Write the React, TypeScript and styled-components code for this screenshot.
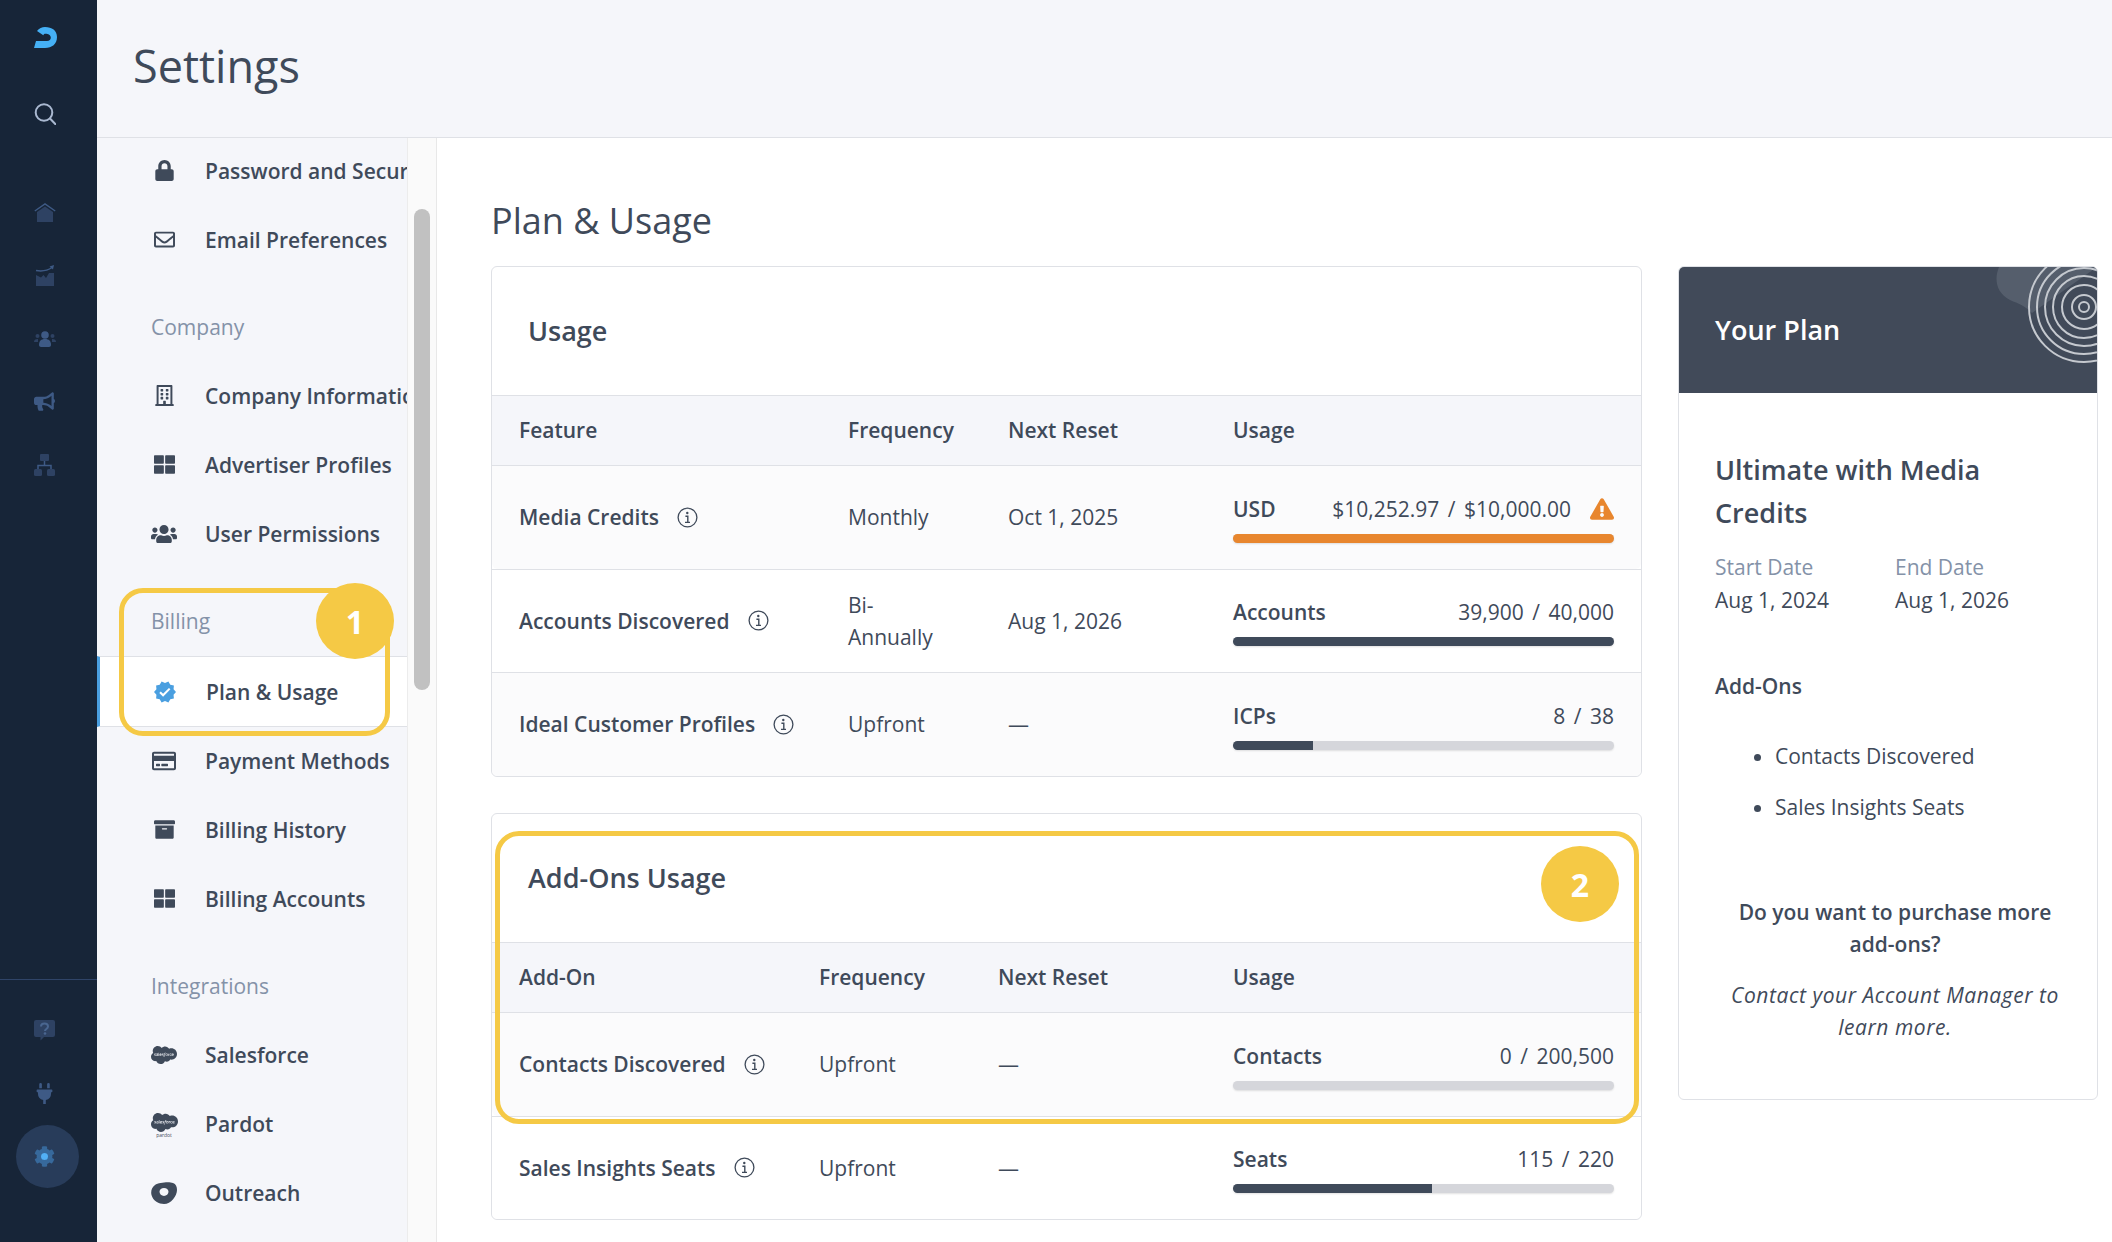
import React from 'react';
import styled, { createGlobalStyle } from 'styled-components';
import {
  FaArchive,
  FaBullhorn,
  FaCog,
  FaExclamationTriangle,
  FaLock,
  FaPlug,
  FaRegBuilding,
  FaRegCreditCard,
  FaRegEnvelope,
  FaSalesforce,
  FaThLarge,
  FaUsers,
} from 'react-icons/fa';
import { MdVerified } from 'react-icons/md';

const GlobalStyle = createGlobalStyle`
  html, body {
    margin: 0;
    height: 100%;
    background: #fff;
    font-family: 'Open Sans', sans-serif;
    color: #3f4a5a;
  }

  * {
    box-sizing: border-box;
  }
`;

const Page = styled.div`
  display: flex;
  width: 2112px;
  height: 1242px;
  overflow: hidden;
`;

/* left rail */
const Rail = styled.nav`
  display: flex;
  flex-direction: column;
  flex: 0 0 97px;
  height: 100%;
  background: #172538;
`;

const RailLogo = styled.div`
  display: flex;
  height: 21px;
  margin: 27px 0 0 34px;
`;

const RailSearch = styled.div`
  display: flex;
  height: 22px;
  margin: 55px 0 0 34px;
`;

const RailGroup = styled.div`
  display: flex;
  flex-direction: column;
  margin-top: 56px;
`;

const RailItem = styled.div<{ $color?: string }>`
  display: flex;
  align-items: center;
  justify-content: center;
  width: 89px;
  height: 63px;
  font-size: 21px;
  color: ${({ $color }) => $color || '#34496d'};
`;

const RailFooter = styled.div`
  display: flex;
  flex-direction: column;
  margin-top: auto;
  padding: 19px 0 54px;
  border-top: 1px solid #2f4468;
`;

const GearCircle = styled.div`
  display: flex;
  align-items: center;
  justify-content: center;
  width: 63px;
  height: 63px;
  margin: 0 0 0 16px;
  padding-right: 6px;
  border-radius: 50%;
  background: #283c5a;
`;

const GearIcon = styled.span`
  position: relative;
  display: flex;
  font-size: 21px;
  color: #37699c;

  &::after {
    content: '';
    position: absolute;
    top: 7px;
    left: 7px;
    width: 7px;
    height: 7px;
    border-radius: 50%;
    background: #52b0f5;
  }
`;

/* right of the rail */
const Column = styled.div`
  display: flex;
  flex-direction: column;
  flex: 1;
  min-width: 0;
`;

const Header = styled.header`
  display: flex;
  align-items: center;
  flex: 0 0 138px;
  padding: 0 0 6px 36px;
  background: #f5f6fa;
  border-bottom: 1px solid #dfe1e6;
`;

const HeaderTitle = styled.h1`
  margin: 0;
  font-size: 45px;
  font-weight: 400;
  color: #3f4a5a;
`;

const Body = styled.div`
  display: flex;
  flex: 1;
  min-height: 0;
`;

/* settings menu */
const Menu = styled.aside`
  position: relative;
  flex: 0 0 310px;
  overflow: hidden;
  background: #f5f6fa;

  > :first-child {
    margin-top: -2px;
  }
`;

const MenuLabel = styled.div`
  display: flex;
  align-items: center;
  height: 69px;
  margin-top: 18px;
  padding-left: 54px;
  font-size: 21px;
  color: #8492a8;
`;

const MenuRow = styled.div<{ $active?: boolean }>`
  display: flex;
  align-items: center;
  height: ${({ $active }) => ($active ? '71px' : '69px')};
  margin: ${({ $active }) => ($active ? '1px 0 -1px' : '0')};
  padding-left: ${({ $active }) => ($active ? '38px' : '40px')};
  font-size: 21px;
  font-weight: 600;
  white-space: nowrap;
  color: #3f4a5a;
  background: ${({ $active }) => ($active ? '#fff' : 'transparent')};
  border-left: ${({ $active }) => ($active ? '3px solid #4a9fe0' : '0')};
  border-top: ${({ $active }) => ($active ? '1px solid #dfe1e6' : '0')};
  border-bottom: ${({ $active }) => ($active ? '1px solid #dfe1e6' : '0')};
`;

const MenuIcon = styled.span<{ $color?: string }>`
  display: flex;
  align-items: center;
  justify-content: center;
  flex: 0 0 54px;
  margin-right: 14px;
  font-size: 21px;
  color: ${({ $color }) => $color || '#3f4a5a'};
`;

const PardotMark = styled.span`
  display: flex;
  flex-direction: column;
  align-items: center;
  line-height: 1;

  small {
    font-size: 5px;
    font-weight: 400;
    line-height: 5px;
    margin-top: -3px;
  }
`;

const ScrollTrack = styled.div`
  flex: 0 0 30px;
  padding: 71px 6px 0;
  background: #fafafa;
  border-left: 1px solid #ececec;
  border-right: 1px solid #e8e8e8;
`;

const ScrollThumb = styled.div`
  height: 481px;
  border-radius: 8px;
  background: #c1c1c1;
`;

/* callouts */
const Callout = styled.div<{ $left: number; $top: number; $width: number; $height: number }>`
  position: absolute;
  left: ${({ $left }) => $left}px;
  top: ${({ $top }) => $top}px;
  width: ${({ $width }) => $width}px;
  height: ${({ $height }) => $height}px;
  border: 5px solid #f5c945;
  border-radius: 24px;
  pointer-events: none;
`;

const Badge = styled.div<{ $left: number; $top: number }>`
  position: absolute;
  left: ${({ $left }) => $left}px;
  top: ${({ $top }) => $top}px;
  display: flex;
  align-items: center;
  justify-content: center;
  width: 78px;
  height: 76px;
  border-radius: 50%;
  background: #f5c945;
  color: #fff;
  font-size: 32px;
  font-weight: 700;
`;

/* plan and usage */
const Main = styled.main`
  flex: 1;
  min-width: 0;
  padding: 0 14px 0 54px;
  background: #fff;
`;

const MainTitle = styled.h2`
  display: flex;
  align-items: center;
  height: 128px;
  margin: 0;
  padding-top: 36px;
  font-size: 36px;
  font-weight: 400;
  color: #3f4a5a;
`;

const MainGrid = styled.div`
  display: grid;
  grid-template-columns: 1151px 420px;
  column-gap: 36px;
  align-items: start;
`;

const Stack = styled.div`
  display: flex;
  flex-direction: column;
  row-gap: 36.5px;
`;

const Card = styled.section`
  position: relative;
  border: 1px solid #dfe1e6;
  border-radius: 6px;
  background: #fff;
`;

const CardTitle = styled.h3`
  display: flex;
  align-items: center;
  height: 128px;
  margin: 0;
  padding: 0 0 2px 36px;
  font-size: 27px;
  font-weight: 600;
  color: #3f4a5a;
`;

const Row = styled.div<{ $cols: string; $tint?: string }>`
  display: grid;
  grid-template-columns: ${({ $cols }) => $cols};
  align-items: center;
  padding: 0 27px;
  border-top: 1px solid #dfe1e6;
  background: ${({ $tint }) => $tint || '#fff'};
`;

const HeadRow = styled(Row)`
  height: 70px;
  padding-bottom: 2px;
  font-size: 21px;
  font-weight: 600;
`;

const DataRow = styled(Row)`
  height: 103.5px;
  font-size: 21px;
  line-height: 32px;
  border-bottom-left-radius: 6px;
  border-bottom-right-radius: 6px;
`;

const FeatureName = styled.div`
  display: flex;
  align-items: center;
  column-gap: 18px;
  font-weight: 600;
`;

const UsageCell = styled.div`
  display: flex;
  flex-direction: column;
  padding-top: 3px;
`;

const UsageLine = styled.div`
  display: flex;
  align-items: center;
  justify-content: space-between;
  line-height: 29px;
`;

const UsageLabel = styled.span`
  font-weight: 600;
`;

const UsageValues = styled.span`
  display: flex;
  align-items: center;
`;

const Slash = styled.span`
  margin: 0 8.5px;
`;

const WarnIcon = styled.span`
  display: flex;
  margin-left: 19px;
  font-size: 24px;
  color: #e8862e;
`;

const Bar = styled.div`
  height: 9px;
  margin-top: 10px;
  overflow: hidden;
  border-radius: 5px;
  background: #d5d6db;
  box-shadow: 0 1px 2px rgba(0, 0, 0, 0.12);
`;

const BarFill = styled.div<{ $color?: string }>`
  height: 100%;
  background: ${({ $color }) => $color || '#3f4a5a'};
`;

/* your plan */
const PlanCard = styled.section`
  border: 1px solid #dfe1e6;
  border-radius: 6px;
  overflow: hidden;
  background: #fff;
`;

const PlanHeader = styled.div`
  position: relative;
  display: flex;
  align-items: center;
  height: 126px;
  padding: 0 0 2px 36px;
  background: #414a59;
  color: #fff;
  font-size: 27px;
  font-weight: 600;
`;

const PlanArt = styled.svg`
  position: absolute;
  top: 0;
  right: 0;
`;

const PlanBody = styled.div`
  padding: 55px 22px 56px 36px;
  font-size: 21px;
  line-height: 32px;
`;

const PlanName = styled.h4`
  max-width: 300px;
  margin: 0;
  font-size: 27px;
  font-weight: 600;
  line-height: 43px;
`;

const Dates = styled.div`
  display: grid;
  grid-template-columns: 180px 1fr;
  margin-top: 17px;
  row-gap: 1px;
`;

const DateLabel = styled.div`
  color: #8492a8;
`;

const AddOnsTitle = styled.div`
  margin-top: 54px;
  font-weight: 600;
`;

const AddOnsList = styled.ul`
  margin: 38px 0 0;
  padding-left: 60px;

  li + li {
    margin-top: 19px;
  }
`;

const Cta = styled.p`
  margin: 73px 0 0;
  font-weight: 600;
  text-align: center;
`;

const CtaNote = styled.p`
  margin: 19px 0 0;
  font-style: italic;
  letter-spacing: 0.55px;
  text-align: center;
`;

function InfoIcon() {
  return (
    <svg width="21" height="21" viewBox="0 0 21 21" fill="none" stroke="#3f4a5a">
      <circle cx="10.5" cy="10.5" r="9.4" strokeWidth="1.3" />
      <circle cx="10.3" cy="6" r="1.2" fill="#3f4a5a" stroke="none" />
      <path d="M8.4 9.2h2.4v6M8 15.4h5" strokeWidth="1.4" />
    </svg>
  );
}

function Logo() {
  return (
    <svg width="23" height="21" viewBox="0 0 23 21">
      <path
        fill="#45b0f5"
        d="M3 4C5 1.500 8 0 11 0c7 0 12 3.500 12 10 0 7-5 11-12 11H0l2-7h11c2.500 0 3.800-1.400 3.800-3.400 0-2.400-2.500-3.800-5.500-3.800-.8 0-1.400.4-2 1.400z"
      />
    </svg>
  );
}

function SearchIcon() {
  return (
    <svg width="22" height="22" viewBox="0 0 22 22" fill="none" stroke="#a9b8d0" strokeWidth="2">
      <circle cx="10" cy="9.500" r="8.300" />
      <path d="M16 15.500l5.500 5.800" strokeLinecap="round" />
    </svg>
  );
}

function HomeIcon() {
  return (
    <svg width="22" height="20" viewBox="0 0 22 20">
      <path d="M0.800 8L11 1l10.200 7" fill="none" stroke="#3e5a85" strokeWidth="1.500" />
      <path d="M3 9l8-5.500L19 9v10H3z" fill="#2e4263" />
    </svg>
  );
}

function ChartIcon() {
  return (
    <svg width="20" height="22" viewBox="0 0 20 22">
      <path d="M1 5.500c6 1 11 .5 16-3" fill="none" stroke="#3e5a85" strokeWidth="1.500" />
      <path d="M14.500 1.500L19 0l-1 4.500z" fill="#3e5a85" />
      <path d="M1 21V10l5 2.500 2.500-2.500 2.500 3 3-5h5v13z" fill="#2e4263" />
    </svg>
  );
}

function RailUsersIcon() {
  return (
    <svg width="22" height="16" viewBox="0 0 22 16">
      <circle cx="3.500" cy="5" r="2" fill="#2e4263" />
      <circle cx="18.500" cy="5" r="2" fill="#2e4263" />
      <path d="M0 11c0-2 1-3 4-3v3zM22 11c0-2-1-3-4-3v3z" fill="#2e4263" />
      <circle cx="11" cy="4" r="3.800" fill="#3e5a85" />
      <path d="M5 14c0-4 2-6 6-6s6 2 6 6c0 1-1 2-2 2H7c-1 0-2-1-2-2z" fill="#3e5a85" />
    </svg>
  );
}

function SitemapIcon() {
  return (
    <svg width="21" height="22" viewBox="0 0 21 22">
      <rect x="6" y="0" width="9" height="7" rx="1" fill="#2e4263" />
      <rect x="0" y="15" width="8" height="7" rx="1.500" fill="#2e4263" />
      <rect x="13" y="15" width="8" height="7" rx="1.500" fill="#2e4263" />
      <path d="M10.500 7v4.500M4 15v-3.500h13V15" fill="none" stroke="#3e5a85" strokeWidth="1.500" />
    </svg>
  );
}

function HelpIcon() {
  return (
    <svg width="21" height="21" viewBox="0 0 21 21">
      <path
        d="M2 0h17a2 2 0 012 2v13a2 2 0 01-2 2H10l-3.500 3.500V17H2a2 2 0 01-2-2V2a2 2 0 012-2z"
        fill="#2e4263"
      />
      <path
        d="M7 6.500C7 4.500 8.500 3.500 10.500 3.500s3.500 1 3.500 3c0 2.500-3 2.500-3 4.500"
        fill="none"
        stroke="#4a6690"
        strokeWidth="2"
      />
      <circle cx="11" cy="13.500" r="1.300" fill="#4a6690" />
    </svg>
  );
}

function OutreachIcon() {
  return (
    <svg width="26" height="22" viewBox="0 0 26 22">
      <path
        fillRule="evenodd"
        fill="#3f4a5a"
        d="M4 3C8 .5 18-.5 22 1c3 1 4 4 4 7 0 6-6 14-13 14-5 0-11-3-12.500-9C-.5 9 1 5 4 3zM13 6c-2.500 0-4.500 1.600-4.500 3.800S10.500 14 13 14s4.500-2 4.500-4.200S15.500 6 13 6z"
      />
    </svg>
  );
}

function PlanRings() {
  const rings = [55, 47, 39, 31, 22, 12, 5];
  return (
    <PlanArt width="120" height="126" viewBox="0 0 120 126">
      <path d="M22 0C17 12 19 26 33 33c9 4 14 5 22 13L120 0z" fill="#555e6c" />
      {rings.map((r) => (
        <circle key={r} cx="107" cy="40" r={r} fill="none" stroke="#c5c9cf" strokeWidth="2" />
      ))}
    </PlanArt>
  );
}

const USAGE_COLS = '329px 160px 225px 1fr';
const ADDON_COLS = '300px 179px 235px 1fr';

type UsageRowData = {
  name: string;
  frequency: React.ReactNode;
  reset: string;
  label: string;
  used: string;
  total: string;
  percent: number;
  warn?: boolean;
};

const usageRows: UsageRowData[] = [
  {
    name: 'Media Credits',
    frequency: 'Monthly',
    reset: 'Oct 1, 2025',
    label: 'USD',
    used: '$10,252.97',
    total: '$10,000.00',
    percent: 100,
    warn: true,
  },
  {
    name: 'Accounts Discovered',
    frequency: (
      <>
        Bi-
        <br />
        Annually
      </>
    ),
    reset: 'Aug 1, 2026',
    label: 'Accounts',
    used: '39,900',
    total: '40,000',
    percent: 100,
  },
  {
    name: 'Ideal Customer Profiles',
    frequency: 'Upfront',
    reset: '—',
    label: 'ICPs',
    used: '8',
    total: '38',
    percent: 21,
  },
];

const addOnRows: UsageRowData[] = [
  {
    name: 'Contacts Discovered',
    frequency: 'Upfront',
    reset: '—',
    label: 'Contacts',
    used: '0',
    total: '200,500',
    percent: 0,
  },
  {
    name: 'Sales Insights Seats',
    frequency: 'Upfront',
    reset: '—',
    label: 'Seats',
    used: '115',
    total: '220',
    percent: 52.3,
  },
];

function UsageRow({ row, cols, tint }: { row: UsageRowData; cols: string; tint?: string }) {
  return (
    <DataRow $cols={cols} $tint={tint}>
      <FeatureName>
        {row.name}
        <InfoIcon />
      </FeatureName>
      <div>{row.frequency}</div>
      <div>{row.reset}</div>
      <UsageCell>
        <UsageLine>
          <UsageLabel>{row.label}</UsageLabel>
          <UsageValues>
            {row.used}
            <Slash>/</Slash>
            {row.total}
            {row.warn && (
              <WarnIcon>
                <FaExclamationTriangle />
              </WarnIcon>
            )}
          </UsageValues>
        </UsageLine>
        <Bar>
          <BarFill $color={row.warn ? '#e8862e' : undefined} style={{ width: `${row.percent}%` }} />
        </Bar>
      </UsageCell>
    </DataRow>
  );
}

function SettingsMenu() {
  return (
    <Menu>
      <MenuRow>
        <MenuIcon><FaLock /></MenuIcon>
        Password and Security
      </MenuRow>
      <MenuRow>
        <MenuIcon><FaRegEnvelope /></MenuIcon>
        Email Preferences
      </MenuRow>
      <MenuLabel>Company</MenuLabel>
      <MenuRow>
        <MenuIcon><FaRegBuilding /></MenuIcon>
        Company Information
      </MenuRow>
      <MenuRow>
        <MenuIcon><FaThLarge /></MenuIcon>
        Advertiser Profiles
      </MenuRow>
      <MenuRow>
        <MenuIcon><FaUsers size={26} /></MenuIcon>
        User Permissions
      </MenuRow>
      <MenuLabel>Billing</MenuLabel>
      <MenuRow $active>
        <MenuIcon $color="#4a9fe0"><MdVerified size={24} /></MenuIcon>
        Plan &amp; Usage
      </MenuRow>
      <MenuRow>
        <MenuIcon><FaRegCreditCard size={24} /></MenuIcon>
        Payment Methods
      </MenuRow>
      <MenuRow>
        <MenuIcon><FaArchive /></MenuIcon>
        Billing History
      </MenuRow>
      <MenuRow>
        <MenuIcon><FaThLarge /></MenuIcon>
        Billing Accounts
      </MenuRow>
      <MenuLabel>Integrations</MenuLabel>
      <MenuRow>
        <MenuIcon><FaSalesforce size={26} /></MenuIcon>
        Salesforce
      </MenuRow>
      <MenuRow>
        <MenuIcon>
          <PardotMark>
            <FaSalesforce size={27} />
            <small>pardot</small>
          </PardotMark>
        </MenuIcon>
        Pardot
      </MenuRow>
      <MenuRow>
        <MenuIcon><OutreachIcon /></MenuIcon>
        Outreach
      </MenuRow>
      <Callout $left={22} $top={450} $width={271} $height={148} />
      <Badge $left={219} $top={445}>1</Badge>
    </Menu>
  );
}

export default function App() {
  return (
    <Page>
      <GlobalStyle />
      <Rail>
        <RailLogo><Logo /></RailLogo>
        <RailSearch><SearchIcon /></RailSearch>
        <RailGroup>
          <RailItem><HomeIcon /></RailItem>
          <RailItem><ChartIcon /></RailItem>
          <RailItem><RailUsersIcon /></RailItem>
          <RailItem $color="#3e5a85"><FaBullhorn /></RailItem>
          <RailItem><SitemapIcon /></RailItem>
        </RailGroup>
        <RailFooter>
          <RailItem><HelpIcon /></RailItem>
          <RailItem $color="#3e5a85"><FaPlug /></RailItem>
          <GearCircle>
            <GearIcon><FaCog /></GearIcon>
          </GearCircle>
        </RailFooter>
      </Rail>
      <Column>
        <Header>
          <HeaderTitle>Settings</HeaderTitle>
        </Header>
        <Body>
          <SettingsMenu />
          <ScrollTrack>
            <ScrollThumb />
          </ScrollTrack>
          <Main>
            <MainTitle>Plan &amp; Usage</MainTitle>
            <MainGrid>
              <Stack>
                <Card>
                  <CardTitle>Usage</CardTitle>
                  <HeadRow $cols={USAGE_COLS} $tint="#f5f6fa">
                    <div>Feature</div>
                    <div>Frequency</div>
                    <div>Next Reset</div>
                    <div>Usage</div>
                  </HeadRow>
                  {usageRows.map((row, i) => (
                    <UsageRow
                      key={row.name}
                      row={row}
                      cols={USAGE_COLS}
                      tint={i % 2 === 0 ? '#fbfbfc' : undefined}
                    />
                  ))}
                </Card>
                <Card>
                  <CardTitle>Add-Ons Usage</CardTitle>
                  <HeadRow $cols={ADDON_COLS} $tint="#f5f6fa">
                    <div>Add-On</div>
                    <div>Frequency</div>
                    <div>Next Reset</div>
                    <div>Usage</div>
                  </HeadRow>
                  {addOnRows.map((row, i) => (
                    <UsageRow
                      key={row.name}
                      row={row}
                      cols={ADDON_COLS}
                      tint={i % 2 === 0 ? '#fbfbfc' : undefined}
                    />
                  ))}
                  <Callout $left={3} $top={17} $width={1144} $height={293} />
                  <Badge $left={1049} $top={32}>2</Badge>
                </Card>
              </Stack>
              <PlanCard>
                <PlanHeader>
                  Your Plan
                  <PlanRings />
                </PlanHeader>
                <PlanBody>
                  <PlanName>Ultimate with Media Credits</PlanName>
                  <Dates>
                    <DateLabel>Start Date</DateLabel>
                    <DateLabel>End Date</DateLabel>
                    <div>Aug 1, 2024</div>
                    <div>Aug 1, 2026</div>
                  </Dates>
                  <AddOnsTitle>Add-Ons</AddOnsTitle>
                  <AddOnsList>
                    <li>Contacts Discovered</li>
                    <li>Sales Insights Seats</li>
                  </AddOnsList>
                  <Cta>Do you want to purchase more add-ons?</Cta>
                  <CtaNote>Contact your Account Manager to learn more.</CtaNote>
                </PlanBody>
              </PlanCard>
            </MainGrid>
          </Main>
        </Body>
      </Column>
    </Page>
  );
}
